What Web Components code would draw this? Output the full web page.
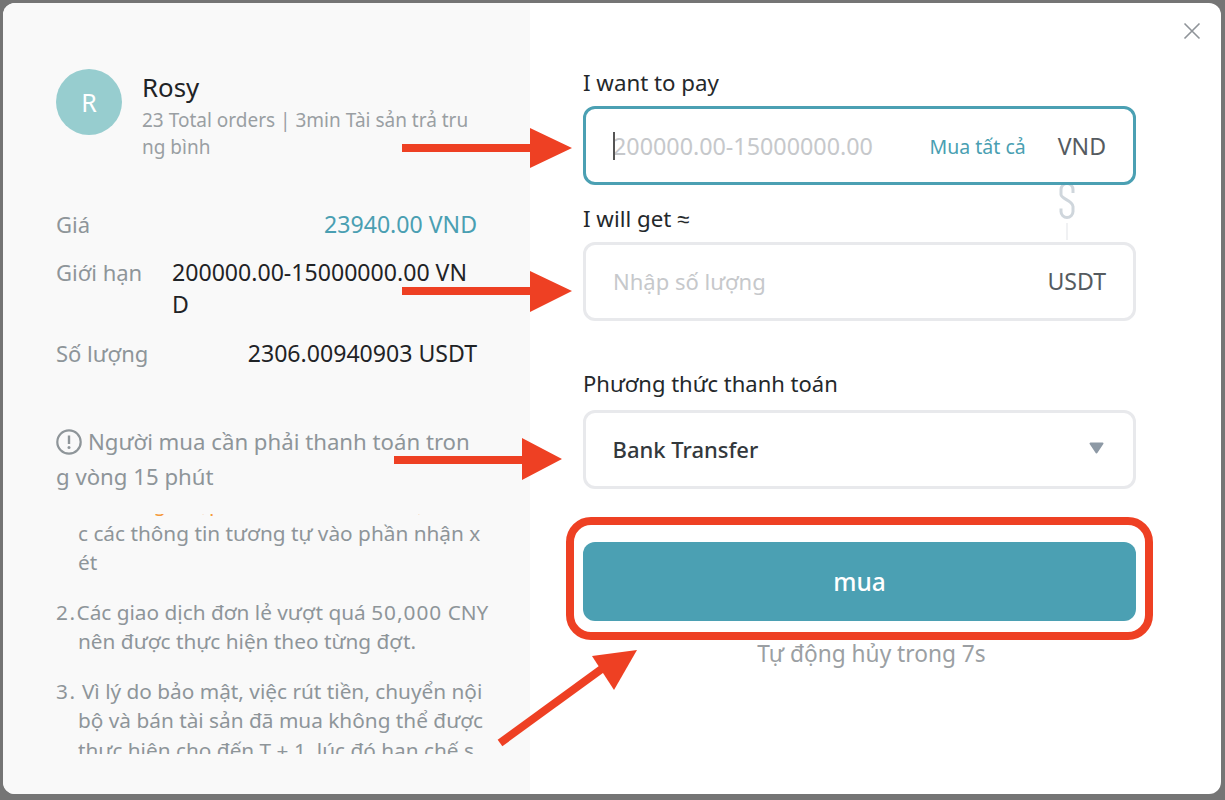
<!DOCTYPE html>
<html lang="vi">
<head>
<meta charset="utf-8">
<title>Mua USDT</title>
<style>
  html, body { margin: 0; height: 100%; background: #757575; }
  body { font-family: "Noto Sans", "Liberation Sans", sans-serif; overflow: hidden; }
</style>
</head>
<body>
<otc-modal>
  <seller-card slot="left" initial="R" name="Rosy">23 Total orders | 3min Tài sản trả tru<br>ng bình</seller-card>

  <info-row slot="left" label="Giá" tone="teal">23940.00 VND</info-row>
  <info-row slot="left" label="Giới hạn" wide gap="15.5">200000.00-15000000.00 VN<br>D</info-row>
  <info-row slot="left" label="Số lượng" gap="17.5">2306.00940903 USDT</info-row>

  <pay-notice slot="left">Người mua cần phải thanh toán tron<br>g vòng 15 phút</pay-notice>

  <note-list slot="left">
    <p class="warn">Xin đừng nhập BTC, USDT, ETH, hoặ</p>
    <p>c các thông tin tương tự vào phần nhận x<br>ét</p>
    <p class="gap"><span style="letter-spacing:1.5px">2.</span>Các giao dịch đơn lẻ vượt quá <span style="letter-spacing:1px">50,000</span> CNY<br>nên được thực hiện theo từng đợt.</p>
    <p class="gap"><span style="letter-spacing:1.5px">3.</span> Vì lý do bảo mật, việc rút tiền, chuyển nội<br>bộ và bán tài sản đã mua không thể được<br>thực hiện cho đến T + 1, lúc đó hạn chế s</p>
  </note-list>

  <field-box slot="right" label="I want to pay" placeholder="200000.00-15000000.00" ph-size="23.3" unit="VND" action="Mua tất cả" focused></field-box>
  <field-box slot="right" label="I will get ≈" placeholder="Nhập số lượng" unit="USDT" top="19" lift="2"></field-box>
  <select-box slot="right" label="Phương thức thanh toán" value="Bank Transfer"></select-box>
  <buy-button slot="right" countdown="Tự động hủy trong 7s">mua</buy-button>
  <chain-link slot="right"></chain-link>
</otc-modal>
<callout-marks></callout-marks>

<script>
// small helper so every element is written the same way
function shadow(el, html) {
  el.attachShadow({ mode: "open" }).innerHTML = html;
}

class OtcModal extends HTMLElement {
  connectedCallback() {
    shadow(this, `
      <style>
        :host { display: block; box-sizing: border-box; height: 800px; padding: 3px 4px 6px 3px; }
        .box { display: flex; height: 100%; background: #fff; border-radius: 12px; overflow: hidden; position: relative; }
        .left { box-sizing: border-box; width: 527px; flex: none; background: #f9f9f9; padding: 66px 30px 0 53px; }
        .right { position: relative; flex: 1; padding: 65px 85px 0 53px; }
        .close { position: absolute; top: 19px; right: 20px; width: 18px; height: 18px; display: block; }
      </style>
      <div class="box">
        <div class="left"><slot name="left"></slot></div>
        <div class="right">
          <svg class="close" viewBox="0 0 18 18"><path d="M1.5 1.5l15 15M16.5 1.5l-15 15" stroke="#8f9499" stroke-width="1.6" fill="none"/></svg>
          <slot name="right"></slot>
        </div>
      </div>`);
  }
}

class SellerCard extends HTMLElement {
  connectedCallback() {
    shadow(this, `
      <style>
        :host { display: flex; gap: 20px; margin-bottom: 47px; }
        .avatar { width: 66px; height: 66px; flex: none; border-radius: 50%; background: #97cdcf; color: #fff;
                  font-size: 25px; display: flex; align-items: center; justify-content: center; }
        .name { font-size: 25.8px; line-height: 38px; color: #1f2326; margin-top: -1px; }
        .sub { font-size: 19px; line-height: 27px; color: #9a9fa3; margin-top: 1px; white-space: nowrap; }
      </style>
      <div class="avatar">${this.getAttribute("initial")}</div>
      <div>
        <div class="name">${this.getAttribute("name")}</div>
        <div class="sub"><slot></slot></div>
      </div>`);
  }
}

class InfoRow extends HTMLElement {
  connectedCallback() {
    let color = this.getAttribute("tone") === "teal" ? "#4a9fb2" : "#1f2326";
    let gap = this.getAttribute("gap") || 0;
    let align = this.hasAttribute("wide") ? "left" : "right";
    shadow(this, `
      <style>
        :host { display: flex; justify-content: space-between; width: 421px; margin-top: ${gap}px; font-size: 23.1px; line-height: 32px; }
        .label { color: #8e9599; font-size: 22px; }
        .value { color: ${color}; text-align: ${align}; white-space: nowrap; }
        ${this.hasAttribute("wide") ? ".value { width: 305px; }" : ""}
      </style>
      <span class="label">${this.getAttribute("label")}</span>
      <span class="value"><slot></slot></span>`);
  }
}

class PayNotice extends HTMLElement {
  connectedCallback() {
    shadow(this, `
      <style>
        :host { display: block; margin-top: 55px; font-size: 22.2px; line-height: 35px; color: #8e9599; white-space: nowrap; }
        svg { width: 26px; height: 26px; vertical-align: -5px; margin-right: 6px; }
      </style>
      <svg viewBox="0 0 26 26"><circle cx="13" cy="13" r="11.7" fill="none" stroke="#8e9599" stroke-width="2.2"/><path d="M13 6.5v8.5" stroke="#8e9599" stroke-width="2.4"/><circle cx="13" cy="18.6" r="1.5" fill="#8e9599"/></svg><slot></slot>`);
  }
}

class NoteList extends HTMLElement {
  connectedCallback() {
    shadow(this, `
      <style>
        :host { display: block; height: 240px; margin-top: 20px; overflow: hidden; font-size: 20.8px; line-height: 29.5px; color: #8e9599; white-space: nowrap; }
        .inner { margin-top: -25px; }
        ::slotted(p) { margin: 0; padding-left: 22px; }
        ::slotted(p.warn) { color: #f59a3c; }
        ::slotted(p.gap) { margin-top: 20px; text-indent: -22px; }
      </style>
      <div class="inner"><slot></slot></div>`);
  }
}

class FieldBox extends HTMLElement {
  connectedCallback() {
    let action = this.getAttribute("action");
    let focused = this.hasAttribute("focused");
    let phSize = this.getAttribute("ph-size") || 22;
    let lift = this.getAttribute("lift") || 0;
    shadow(this, `
      <style>
        :host { display: block; position: relative; z-index: 1; margin-top: ${this.getAttribute("top") || 0}px; }
        .label { font-size: 22.3px; line-height: 30px; color: #24282b; margin-bottom: 8px; white-space: nowrap; }
        .box { box-sizing: border-box; height: 79px; border: 3px solid ${focused ? "#4ba0b3" : "#e8e9ec"}; border-radius: 12px;
               display: flex; align-items: center; padding: 0 27px ${lift}px; }
        .box { background: ${focused ? "#fff" : "transparent"}; }
        .ph { flex: 1; font-size: ${phSize}px; color: #c6c8cb; position: relative; white-space: nowrap; }
        .caret { position: absolute; left: 0; top: 2px; bottom: 2px; width: 1.5px; background: #555; }
        .action { font-size: 19.5px; color: #4a9fb2; margin-right: 32px; padding-top: 2px; }
        .unit { font-size: 23.1px; color: #555b60; }
      </style>
      <div class="label">${this.getAttribute("label")}</div>
      <div class="box">
        <div class="ph">${focused ? '<i class="caret"></i>' : ""}${this.getAttribute("placeholder")}</div>
        ${action ? `<span class="action">${action}</span>` : ""}
        <span class="unit">${this.getAttribute("unit")}</span>
      </div>`);
  }
}

class SelectBox extends HTMLElement {
  connectedCallback() {
    shadow(this, `
      <style>
        :host { display: block; margin-top: 47px; }
        .label { font-size: 22px; line-height: 30px; color: #24282b; margin-bottom: 12px; white-space: nowrap; }
        .box { box-sizing: border-box; height: 79px; border: 3px solid #e8e9ec; border-radius: 12px;
               display: flex; align-items: center; justify-content: space-between; padding: 0 29px 2px 26.5px; }
        .val { font-size: 22px; color: #33383c; font-weight: 500; }
        svg { width: 15px; height: 12px; margin-top: -1px; }
      </style>
      <div class="label">${this.getAttribute("label")}</div>
      <div class="box">
        <span class="val">${this.getAttribute("value")}</span>
        <svg viewBox="0 0 15 12"><path d="M1.5 1.5h12L7.500 10.500z" fill="#8d99a5" stroke="#8d99a5" stroke-width="2" stroke-linejoin="round"/></svg>
      </div>`);
  }
}

class BuyButton extends HTMLElement {
  connectedCallback() {
    shadow(this, `
      <style>
        :host { display: block; margin-top: 53px; }
        .btn { height: 79px; border-radius: 12px; background: #4ba0b3; color: #fff; font-size: 24.5px; font-weight: 500;
               display: flex; align-items: center; justify-content: center; }
        .count { margin-top: 18px; padding-left: 24px; text-align: center; font-size: 22.7px; line-height: 30px; color: #9b9fa3; }
      </style>
      <div class="btn"><slot></slot></div>
      <div class="count">${this.getAttribute("countdown")}</div>`);
  }
}

// the link between both amount fields, it sits partly behind the first field
class ChainLink extends HTMLElement {
  connectedCallback() {
    shadow(this, `
      <style>
        :host { position: absolute; left: 529px; top: 162px; width: 16px; height: 76px; display: block; }
        svg { display: block; }
      </style>
      <svg width="16" height="76" viewBox="0 0 16 76">
        <path d="M8 0v16M8 58v17" stroke="#f0f1f3" stroke-width="2"/>
        <path d="M14 28v-3.500a6 6 0 0 0-12 0v5c0 4.500 12 6 12 12v5a6 6 0 0 1-12 0v-3" fill="none" stroke="#cfd6dc" stroke-width="3"/>
      </svg>`);
  }
}

// red annotations drawn on top of the screenshot
class CalloutMarks extends HTMLElement {
  connectedCallback() {
    shadow(this, `
      <style>
        :host { position: absolute; left: 0; top: 0; width: 1225px; height: 800px; display: block; pointer-events: none; }
        svg { display: block; }
      </style>
      <svg width="1225" height="800" viewBox="0 0 1225 800" fill="#ee4023">
        <path d="M402 144H530V128L572 148L530 168V152H402z"/>
        <path d="M402 287H530V271L572 291L530 312V295H402z"/>
        <path d="M394 456H522V438L562 459L522 480V464H394z"/>
        <path d="M500 743L603 668" stroke="#ee4023" stroke-width="8" fill="none"/>
        <path d="M637 650L592 656L614 690z"/>
        <rect x="570" y="521" width="579" height="115" rx="21" fill="none" stroke="#ee4023" stroke-width="8"/>
      </svg>`);
  }
}

customElements.define("otc-modal", OtcModal);
customElements.define("seller-card", SellerCard);
customElements.define("info-row", InfoRow);
customElements.define("pay-notice", PayNotice);
customElements.define("note-list", NoteList);
customElements.define("field-box", FieldBox);
customElements.define("select-box", SelectBox);
customElements.define("buy-button", BuyButton);
customElements.define("chain-link", ChainLink);
customElements.define("callout-marks", CalloutMarks);
</script>
</body>
</html>
